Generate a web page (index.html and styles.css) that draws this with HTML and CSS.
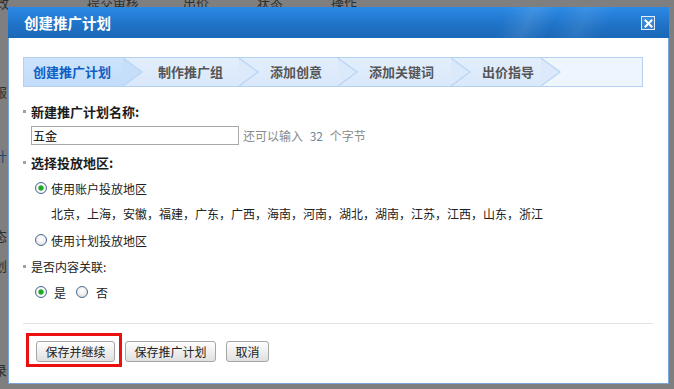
FILE: index.html
```html
<!DOCTYPE html>
<html lang="zh-CN">
<head>
<meta charset="utf-8">
<title>创建推广计划</title>
<link rel="stylesheet" href="styles.css">
</head>
<body>
<div class="page">
  <div class="page-top"><span>改</span><span class="pt-a">提交审核</span><span class="pt-b">出价</span><span class="pt-c">状态</span><span class="pt-d">操作</span></div>
  <ul class="page-side">
    <li class="ps-1">服</li>
    <li class="ps-2">计</li>
    <li class="ps-3">态</li>
    <li class="ps-4">划</li>
    <li class="ps-5">录</li>
  </ul>
</div>

<div class="dialog">
  <div class="dlg-head">
    <h1 class="dlg-title">创建推广计划</h1>
    <button class="dlg-close" type="button" aria-label="关闭">
      <svg width="11" height="11" viewBox="0 0 11 11"><path d="M2.5 2.5 L8.5 8.5 M8.5 2.5 L2.5 8.5" stroke="#fff" stroke-width="2" stroke-linecap="square"/></svg>
    </button>
  </div>

  <div class="dlg-body">
    <ol class="steps">
      <li class="step active"><span>创建推广计划</span><svg class="chev" viewBox="0 0 19 28" preserveAspectRatio="none"><polygon points="0,0 19,14 0,28"/><polyline points="0,0 19,14 0,28"/></svg></li>
      <li class="step"><span>制作推广组</span><svg class="chev" viewBox="0 0 19 28" preserveAspectRatio="none"><polygon points="0,0 19,14 0,28"/><polyline points="0,0 19,14 0,28"/></svg></li>
      <li class="step"><span>添加创意</span><svg class="chev" viewBox="0 0 19 28" preserveAspectRatio="none"><polygon points="0,0 19,14 0,28"/><polyline points="0,0 19,14 0,28"/></svg></li>
      <li class="step"><span>添加关键词</span><svg class="chev" viewBox="0 0 19 28" preserveAspectRatio="none"><polygon points="0,0 19,14 0,28"/><polyline points="0,0 19,14 0,28"/></svg></li>
      <li class="step"><span>出价指导</span><svg class="chev" viewBox="0 0 19 28" preserveAspectRatio="none"><polygon points="0,0 19,14 0,28"/><polyline points="0,0 19,14 0,28"/></svg></li>
    </ol>

    <div class="form">
      <div class="label">新建推广计划名称:</div>
      <div class="name-row">
        <input class="name-input" type="text" value="五金">
        <span class="hint">还可以输入 <em>32</em> 个字节</span>
      </div>
      <div class="label">选择投放地区:</div>
      <div class="opt-row"><span class="radio checked"></span><span>使用账户投放地区</span></div>
      <div class="regions">北京，上海，安徽，福建，广东，广西，海南，河南，湖北，湖南，江苏，江西，山东，浙江</div>
      <div class="opt-row"><span class="radio"></span><span>使用计划投放地区</span></div>
      <div class="label plain">是否内容关联:</div>
      <div class="opt-row yesno"><span class="radio checked"></span><span class="yn">是</span><span class="radio"></span><span class="yn">否</span></div>
    </div>
  </div>

  <div class="dlg-foot">
    <div class="btn-wrap"><button class="btn" type="button">保存并继续</button><span class="mark"></span></div>
    <button class="btn" type="button">保存推广计划</button>
    <button class="btn" type="button">取消</button>
  </div>
</div>
</body>
</html>
```

FILE: styles.css
```css
* { box-sizing: border-box; margin: 0; padding: 0; }

html, body { width: 674px; height: 389px; overflow: hidden; }

body {
  position: relative;
  background: #7f7f7f;
  font-family: "Noto Sans CJK SC", "Noto Sans", sans-serif;
  font-size: 12px;
  color: #333;
}

/* dimmed page behind the dialog */
.page { color: #2e2e2e; font-size: 13px; }
.page-top { display: flex; height: 10px; line-height: 14px; margin-top: -4px; }
.page-top span { flex: none; }
.page-top span:first-child { margin-left: -4px; }
.pt-a { margin-left: 78px; }
.pt-b { margin-left: 44px; }
.pt-c { margin-left: 48px; }
.pt-d { margin-left: 48px; }
.page-side { list-style: none; margin-left: -6px; }
.page-side li { height: 20px; line-height: 20px; }
.ps-1 { margin-top: 76px; }
.ps-2 { margin-top: 44px; color: #23486e; }
.ps-3 { margin-top: 60px; }
.ps-4 { margin-top: 10px; }
.ps-5 { margin-top: 84px; }

/* dialog */
.dialog {
  position: absolute;
  left: 8px;
  top: 7px;
  width: 661px;
  height: 377px;
  background: #fff;
  border: 1px solid #78a4d8;
  border-top: none;
  display: flex;
  flex-direction: column;
}

.dlg-head {
  flex: none;
  height: 31px;
  margin: 0 -1px;
  padding: 0 14px 0 16px;
  display: flex;
  align-items: center;
  justify-content: space-between;
  background:
    linear-gradient(115deg, rgba(255,255,255,0) 74%, rgba(255,255,255,0.10) 78%, rgba(255,255,255,0) 82%, rgba(255,255,255,0.08) 86%, rgba(255,255,255,0) 90%),
    linear-gradient(#2b8ae6, #1f72c6 60%, #1a68b8);
}

.dlg-title {
  font-size: 14.5px;
  font-weight: bold;
  color: #fff;
  line-height: 20px;
}

.dlg-close {
  width: 14px;
  height: 14px;
  border: 1px solid rgba(255,255,255,0.85);
  background: rgba(255,255,255,0.12);
  display: flex;
  align-items: center;
  justify-content: center;
  margin-top: 1px;
}
.dlg-close svg { display: block; }

.dlg-body {
  flex: none;
  padding: 19px 0 0 14px;
}

/* step bar */
.steps {
  list-style: none;
  display: flex;
  width: 620px;
  height: 30px;
  border: 1px solid #b4d1f2;
  background: #eef5fe;
}

.step {
  position: relative;
  flex: none;
  height: 28px;
  line-height: 28px;
  font-size: 13px;
  font-weight: bold;
  color: #555;
  background: linear-gradient(#e2eefc, #d9e8fb);
  white-space: nowrap;
}
.step span { position: relative; z-index: 2; }
.step:nth-child(1) { width: 99px; padding-left: 9px; }
.step:nth-child(2) { width: 116px; padding-left: 35px; }
.step:nth-child(3) { width: 99px; padding-left: 31px; }
.step:nth-child(4) { width: 113px; padding-left: 31px; }
.step:nth-child(5) { width: 90px; padding-left: 31px; }

.step.active {
  color: #0f5fc4;
  background: linear-gradient(#cde3fc, #c2dcfa);
}

.chev {
  position: absolute;
  top: 0;
  right: -19px;
  width: 19px;
  height: 28px;
  overflow: visible;
  z-index: 1;
}
.chev polygon { fill: #dbe9fb; }
.active .chev polygon { fill: #c5defa; }
.chev polyline { fill: none; stroke: #b9d5f4; stroke-width: 1.3; }

/* form */
.form {
  display: flex;
  flex-direction: column;
  gap: 6px;
  padding-top: 14px;
}

.label {
  display: flex;
  align-items: center;
  height: 20px;
  font-size: 13px;
  font-weight: bold;
  color: #1c1c1c;
}
.label::before {
  content: "";
  width: 3px;
  height: 3px;
  background: #a0a0a0;
  margin-right: 5px;
}
.label.plain { font-size: 12px; font-weight: normal; color: #222; }

.name-row {
  display: flex;
  align-items: center;
  height: 19px;
  padding-left: 8px;
  margin-top: -1px;
  margin-bottom: 1px;
}
.name-input {
  width: 208px;
  height: 19px;
  border: 1px solid #a8a8a8;
  padding: 0 1px;
  font-family: "Noto Sans CJK SC", sans-serif;
  font-size: 12px;
  color: #000;
  outline: none;
}
.hint { margin-left: 4px; color: #8a8a8a; white-space: pre; }
.hint em { font-style: normal; color: #6c84a0; margin: 0 4px; }

.opt-row {
  display: flex;
  align-items: center;
  height: 20px;
  padding-left: 12px;
  color: #222;
}
.opt-row .radio { margin-right: 4px; }

.radio {
  flex: none;
  width: 12px;
  height: 12px;
  border-radius: 50%;
  border: 1px solid #4a6a92;
  background: radial-gradient(circle at 50% 40%, #ffffff 0, #f2f2f2 45%, #cfd3d8 100%);
}
.radio.checked {
  background: radial-gradient(circle, #1f9e22 0, #2aa82c 2.2px, #d8eed8 3px, #ffffff 3.8px, #f0f0f0 4.6px, #cdd1d6 100%);
}

.yesno .radio:first-child { margin-right: 7px; }
.yesno .yn:nth-child(2) { margin-right: 10px; }
.yesno .radio:nth-child(3) { margin-right: 8px; }

.regions {
  height: 20px;
  line-height: 20px;
  padding-left: 28px;
  color: #222;
  white-space: nowrap;
}

/* footer */
.dlg-foot {
  flex: none;
  width: 630px;
  margin: 21px 0 0 14px;
  border-top: 1px solid #e2e2e2;
  padding: 17px 0 0 13px;
  display: flex;
  gap: 10px;
}

.btn-wrap { position: relative; display: flex; }

.btn {
  height: 21px;
  padding: 0 8.5px;
  border: 1px solid #a6a6a6;
  border-radius: 3px;
  background: linear-gradient(#fefefe, #ececec 60%, #e0e0e0);
  font-family: "Noto Sans CJK SC", sans-serif;
  font-size: 12px;
  line-height: 19px;
  color: #222;
}

.mark {
  position: absolute;
  left: -10px;
  top: -8px;
  width: 96px;
  height: 34px;
  border: 3px solid #ec0f0f;
  pointer-events: none;
}
```
